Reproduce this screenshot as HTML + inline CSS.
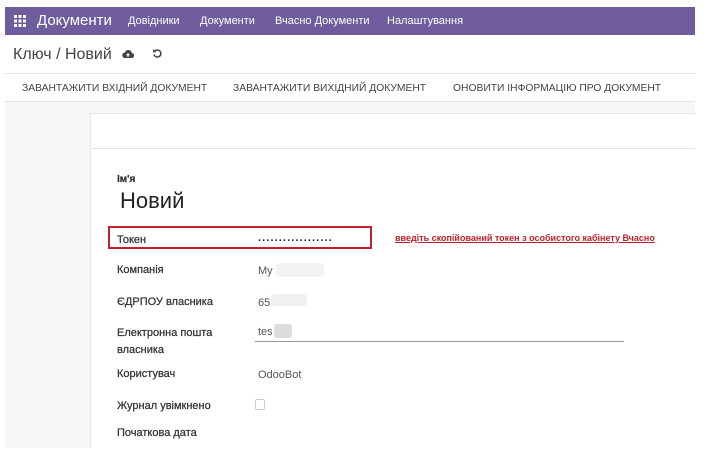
<!DOCTYPE html>
<html><head><meta charset="utf-8"><style>
*{margin:0;padding:0;box-sizing:border-box}
body{width:711px;height:459px;background:#fff;font-family:"Liberation Sans","DejaVu Sans",sans-serif;position:relative;overflow:hidden;color:#333}
.nav{position:absolute;left:5px;top:7px;width:690px;height:28px;background:#6f5c9c;color:#fff}
.nav span{position:absolute;top:8px;font-size:11px}
.bc{position:absolute;left:13px;top:46px;font-size:16px;color:#444}
.line{position:absolute;left:5px;width:690px;height:1px;background:#e6e6e6}
.btns span{position:absolute;top:83px;font-size:10.3px;color:#444}
.gray{position:absolute;left:5px;top:102px;width:690px;height:346px;background:#f7f7f8}
.card{position:absolute;left:90px;top:113px;width:605px;height:335px;background:#fff;border:1px solid #e6e6e6;border-right:none;border-bottom:none}
.hdr{position:absolute;left:90px;top:148px;width:605px;height:1px;background:#e6e6e6}
.lb{position:absolute;left:117px;font-size:11px;color:#333;-webkit-text-stroke:.25px #333}
.v{position:absolute;left:258px;font-size:11px;color:#555}
.blur{position:absolute;background:#ececec;border-radius:3px}
</style></head><body>
<div class="nav">
<svg style="position:absolute;left:9px;top:8px" width="12" height="12" viewBox="0 0 12 12" fill="#fff"><rect x="0" y="0" width="3" height="3"/><rect x="4.5" y="0" width="3" height="3"/><rect x="9" y="0" width="3" height="3"/><rect x="0" y="4.5" width="3" height="3"/><rect x="4.5" y="4.5" width="3" height="3"/><rect x="9" y="4.5" width="3" height="3"/><rect x="0" y="9" width="3" height="3"/><rect x="4.5" y="9" width="3" height="3"/><rect x="9" y="9" width="3" height="3"/></svg>
<span style="left:32px;top:5px;font-size:15px">Документи</span>
<span style="left:123px">Довідники</span>
<span style="left:195px">Документи</span>
<span style="left:270px">Вчасно Документи</span>
<span style="left:382px">Налаштування</span>
</div>
<div class="bc">Ключ / Новий</div>
<svg style="position:absolute;left:122px;top:49px" width="12" height="10" viewBox="0 0 12 10"><path d="M3 9h6.5a2.5 2.5 0 0 0 .3-5A3.5 3.5 0 0 0 3 3.5 2.7 2.7 0 0 0 3 9z" fill="#444"/><path d="M6 8V5M4.6 6.3 6 4.8l1.4 1.5" stroke="#fff" stroke-width="1.1" fill="none"/></svg>
<svg style="position:absolute;left:152px;top:48px" width="11" height="11" viewBox="0 0 11 11"><path d="M2.5 3.5A3.5 3.5 0 1 1 2 6.5" stroke="#444" stroke-width="1.5" fill="none"/><path d="M1 1v3.3h3.3z" fill="#444"/></svg>
<div class="line" style="top:73px"></div>
<div class="btns">
<span style="left:22px">ЗАВАНТАЖИТИ ВХІДНИЙ ДОКУМЕНТ</span>
<span style="left:233px">ЗАВАНТАЖИТИ ВИХІДНИЙ ДОКУМЕНТ</span>
<span style="left:453px">ОНОВИТИ ІНФОРМАЦІЮ ПРО ДОКУМЕНТ</span>
</div>
<div class="line" style="top:101px"></div>
<div class="gray"></div>
<div class="card"></div>
<div class="hdr"></div>
<div class="lb" style="top:174px;font-size:10px;font-weight:bold">Ім'я</div>
<div style="position:absolute;left:120px;top:188px;font-size:22px;color:#222">Новий</div>
<div style="position:absolute;left:108px;top:226px;width:264px;height:23px;border:2px solid #c0202a"></div>
<div class="lb" style="top:234px">Токен</div>
<div class="v" style="top:232px;color:#222;font-weight:bold;font-size:11px;letter-spacing:1.1px">..................</div>
<div style="position:absolute;left:395px;top:233px;font-size:9px;font-weight:bold;color:#c0202a;text-decoration:underline">введіть скопійований токен з особистого кабінету Вчасно</div>
<div class="lb" style="top:264px">Компанія</div>
<div class="v" style="top:265px">My</div><div class="blur" style="left:276px;top:263px;width:48px;height:14px;background:#f2f2f2"></div>
<div class="lb" style="top:296px">ЄДРПОУ власника</div>
<div class="v" style="top:297px">65</div><div class="blur" style="left:271px;top:294px;width:36px;height:12px;background:#f0f0f0"></div>
<div class="lb" style="top:325px;line-height:17px">Електронна пошта<br>власника</div>
<div class="v" style="top:326px">tes</div><div class="blur" style="left:274px;top:324px;width:18px;height:14px;background:#ddd"></div>
<div style="position:absolute;left:255px;top:341px;width:369px;height:1px;background:#999"></div>
<div class="lb" style="top:368px">Користувач</div>
<div class="v" style="top:369px">OdooBot</div>
<div class="lb" style="top:400px">Журнал увімкнено</div>
<div style="position:absolute;left:255px;top:399px;width:10px;height:11px;border:1px solid #ccc;border-radius:2px"></div>
<div class="lb" style="top:427px">Початкова дата</div>
</body></html>
